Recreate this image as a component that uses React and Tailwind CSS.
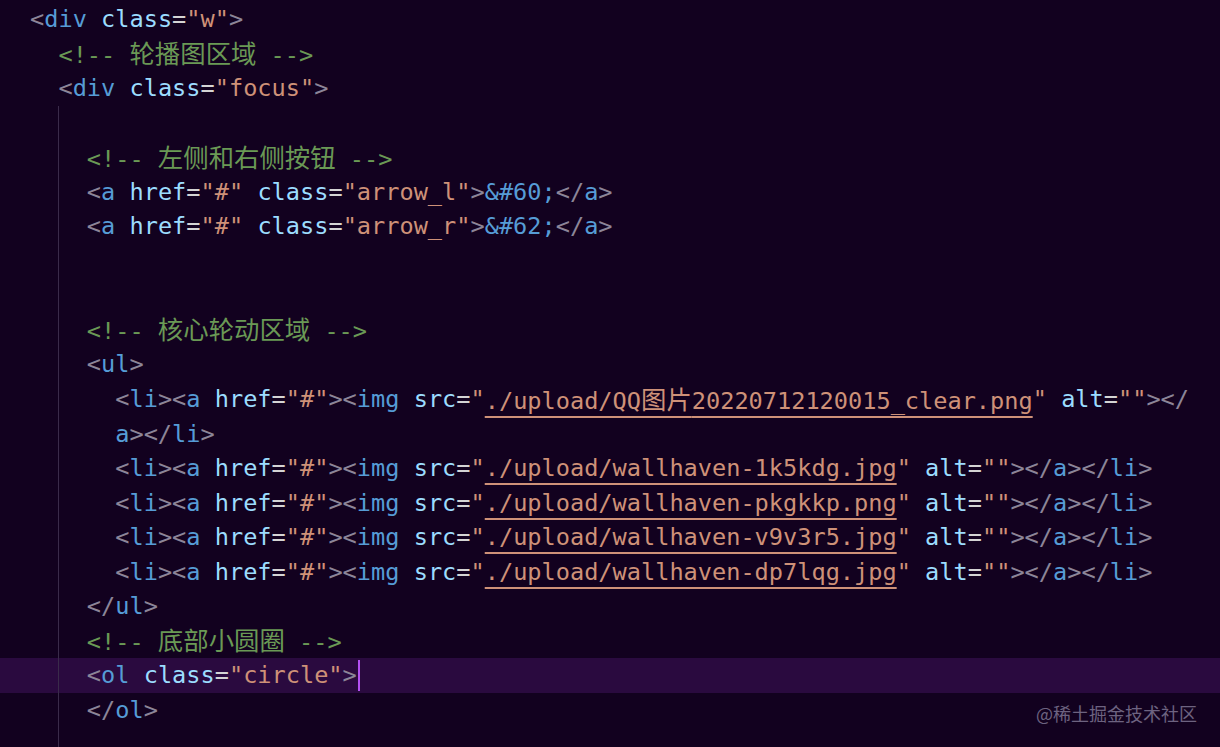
import React from "react";

// token colours, editor theme
const tone = {
  p: "text-[#8c8598]", // brackets
  t: "text-[#569cd6]", // tag names
  a: "text-[#9cdcfe]", // attribute names
  e: "text-[#d4d4d4]", // =
  s: "text-[#ce9178]", // strings
  u: "text-[#ce9178] underline decoration-2 underline-offset-[7px] decoration-[#ce9178]",
  c: "text-[#6a9955]", // comments
  n: "text-[#569cd6]", // entities
  x: "text-[#d4d4d4]",
};

const li = (file) => [
  ["p", "<"], ["t", "li"], ["p", "><"], ["t", "a"], ["x", " "], ["a", "href"], ["e", "="], ["s", '"#"'],
  ["p", "><"], ["t", "img"], ["x", " "], ["a", "src"], ["e", "="], ["s", '"'], ["u", "./upload/" + file],
  ["s", '"'], ["x", " "], ["a", "alt"], ["e", "="], ["s", '""'], ["p", "></"], ["t", "a"], ["p", "></"],
  ["t", "li"], ["p", ">"],
];

const arrow = (cls, ent) => [
  ["p", "<"], ["t", "a"], ["x", " "], ["a", "href"], ["e", "="], ["s", '"#"'], ["x", " "], ["a", "class"],
  ["e", "="], ["s", `"${cls}"`], ["p", ">"], ["n", ent], ["p", "</"], ["t", "a"], ["p", ">"],
];

const lines = [
  { indent: 0, tokens: [["p", "<"], ["t", "div"], ["x", " "], ["a", "class"], ["e", "="], ["s", '"w"'], ["p", ">"]] },
  { indent: 2, tokens: [["c", "<!-- 轮播图区域 -->"]] },
  { indent: 2, tokens: [["p", "<"], ["t", "div"], ["x", " "], ["a", "class"], ["e", "="], ["s", '"focus"'], ["p", ">"]] },
  { indent: 0, tokens: [], guide: true },
  { indent: 4, tokens: [["c", "<!-- 左侧和右侧按钮 -->"]], guide: true },
  { indent: 4, tokens: arrow("arrow_l", "&#60;"), guide: true },
  { indent: 4, tokens: arrow("arrow_r", "&#62;"), guide: true },
  { indent: 0, tokens: [], guide: true },
  { indent: 0, tokens: [], guide: true },
  { indent: 4, tokens: [["c", "<!-- 核心轮动区域 -->"]], guide: true },
  { indent: 4, tokens: [["p", "<"], ["t", "ul"], ["p", ">"]], guide: true },
  {
    indent: 6,
    guide: true,
    tokens: [
      ["p", "<"], ["t", "li"], ["p", "><"], ["t", "a"], ["x", " "], ["a", "href"], ["e", "="], ["s", '"#"'],
      ["p", "><"], ["t", "img"], ["x", " "], ["a", "src"], ["e", "="], ["s", '"'],
      ["u", "./upload/QQ图片20220712120015_clear.png"], ["s", '"'], ["x", " "], ["a", "alt"], ["e", "="],
      ["s", '""'], ["p", "></"],
    ],
  },
  { indent: 6, tokens: [["t", "a"], ["p", "></"], ["t", "li"], ["p", ">"]], guide: true },
  { indent: 6, tokens: li("wallhaven-1k5kdg.jpg"), guide: true },
  { indent: 6, tokens: li("wallhaven-pkgkkp.png"), guide: true },
  { indent: 6, tokens: li("wallhaven-v9v3r5.jpg"), guide: true },
  { indent: 6, tokens: li("wallhaven-dp7lqg.jpg"), guide: true },
  { indent: 4, tokens: [["p", "</"], ["t", "ul"], ["p", ">"]], guide: true },
  { indent: 4, tokens: [["c", "<!-- 底部小圆圈 -->"]], guide: true },
  {
    indent: 4,
    guide: true,
    current: true,
    tokens: [["p", "<"], ["t", "ol"], ["x", " "], ["a", "class"], ["e", "="], ["s", '"circle"'], ["p", ">"]],
  },
  { indent: 4, tokens: [["p", "</"], ["t", "ol"], ["p", ">"]], guide: true },
  { indent: 0, tokens: [], guide: true },
];

// CJK glyphs are wider than the mono cell, give them their own font
const Text = ({ s }) =>
  s.split(/([\u3400-\u9fff]+)/).map((part, i) =>
    /[\u3400-\u9fff]/.test(part) ? (
      <span key={i} className="font-['Noto_Sans_CJK_SC',sans-serif] text-[25.4px]">
        {part}
      </span>
    ) : (
      part
    )
  );

const Line = ({ line }) => (
  <div
    className={`relative flex h-[34.55px] items-center whitespace-pre pl-[30px] leading-[34.55px] ${
      line.current ? "bg-[#2a0a3f]" : ""
    }`}
  >
    {line.guide && <span className="absolute left-[58px] top-0 h-full w-px bg-[#3a2b4a]" />}
    <span>{" ".repeat(line.indent)}</span>
    {line.tokens.map(([k, s], i) => (
      <span key={i} className={tone[k]}>
        <Text s={s} />
      </span>
    ))}
    {line.current && <span className="ml-[1px] inline-block h-[31px] w-[2px] bg-[#b350f2]" />}
  </div>
);

export default function App() {
  return (
    <div className="relative h-[747px] w-full overflow-hidden bg-[#12011f] pt-[2px] font-['DejaVu_Sans_Mono','Noto_Sans_CJK_SC',monospace] text-[23.6px]">
      {lines.map((line, i) => (
        <Line key={i} line={line} />
      ))}
      <div className="absolute right-[23px] top-[700px] font-['Noto_Sans_CJK_SC',sans-serif] text-[18px] leading-[26px] text-[#6d6380]">
        @稀土掘金技术社区
      </div>
    </div>
  );
}
